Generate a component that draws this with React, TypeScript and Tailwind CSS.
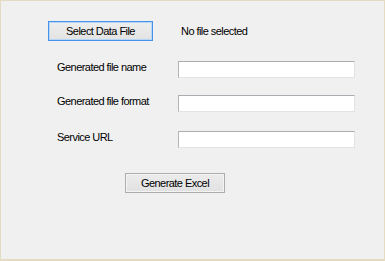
import React from "react";

const font = { fontFamily: '"Liberation Sans", Arial, sans-serif' };

const Field = ({ label }: { label: string }) => (
  <div className="flex items-start">
    <div className="w-[130px] pl-[9px] text-[11px] leading-[13px] tracking-[-0.55px] text-black">
      {label}
    </div>
    <input
      type="text"
      className="w-[177px] h-[17px] bg-white border border-t-[#abadb3] border-l-[#b4b4b4] border-r-[#e3e3e3] border-b-[#e3e3e3] outline-none"
    />
  </div>
);

export default function App() {
  return (
    <div
      className="w-[385px] h-[261px] bg-[#f0f0f0] border border-[#e4dbc2] border-b-2"
      style={font}
    >
      <div className="pl-[47px] pt-[20px] flex flex-col">
        <div className="flex items-center h-[20px]">
          <button className="w-[105px] h-[20px] border border-[#4594e8] shadow-[inset_0_0_0_1px_#b5d6f6] bg-gradient-to-b from-[#eeeeee] to-[#e3e3e3] text-[11px] leading-[13px] tracking-[-0.55px] text-black flex items-center justify-center">
            Select Data File
          </button>
          <span className="ml-[28px] text-[11px] leading-[13px] tracking-[-0.55px] text-black">
            No file selected
          </span>
        </div>

        <div className="mt-[20px] flex flex-col">
          <Field label="Generated file name" />
          <div className="h-[17px]" />
          <Field label="Generated file format" />
          <div className="h-[19px]" />
          <Field label="Service URL" />
        </div>

        <div className="mt-[25px] pl-[77px]">
          <button className="w-[100px] h-[20px] border border-[#adadad] shadow-[inset_0_0_0_1px_#f4f4f4] bg-gradient-to-b from-[#ececec] to-[#e1e1e1] text-[11px] leading-[13px] tracking-[-0.55px] text-black flex items-center justify-center">
            Generate Excel
          </button>
        </div>
      </div>
    </div>
  );
}
